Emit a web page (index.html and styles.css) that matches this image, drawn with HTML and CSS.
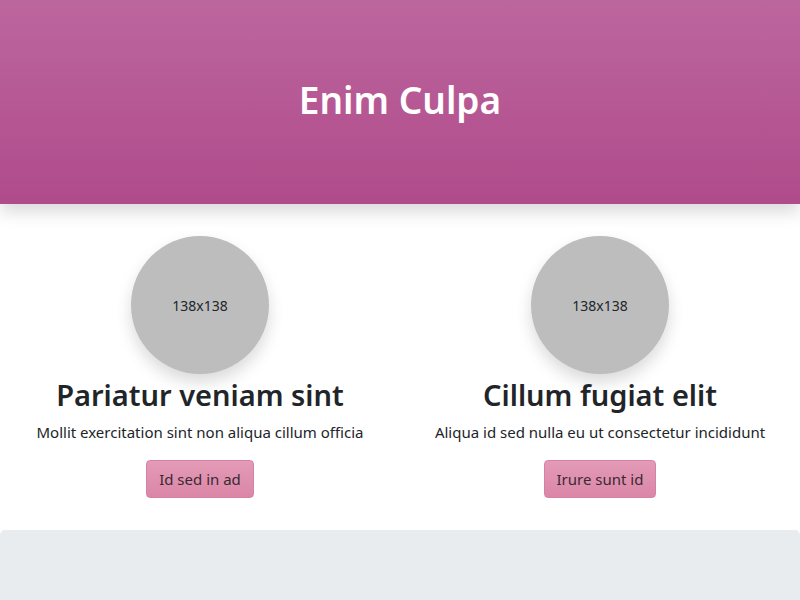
FILE: index.html
```html
<!DOCTYPE html>
<html lang="en">
<head>
<meta charset="utf-8">
<title>Enim Culpa</title>
<link rel="stylesheet" href="styles.css">
</head>
<body>
<header class="hero">
  <h1 class="hero-title">Enim Culpa</h1>
</header>
<main class="features">
  <div class="feature">
    <div class="avatar">138x138</div>
    <h2 class="feature-title">Pariatur veniam sint</h2>
    <p class="feature-text">Mollit exercitation sint non aliqua cillum officia</p>
    <button class="btn">Id sed in ad</button>
  </div>
  <div class="feature">
    <div class="avatar">138x138</div>
    <h2 class="feature-title">Cillum fugiat elit</h2>
    <p class="feature-text">Aliqua id sed nulla eu ut consectetur incididunt</p>
    <button class="btn">Irure sunt id</button>
  </div>
</main>
<section class="jumbotron"></section>
</body>
</html>
```
FILE: styles.css
```css
* { box-sizing: border-box; }
html, body { margin: 0; padding: 0; }
body {
  font-family: "Noto Sans", "Open Sans", sans-serif;
  color: #212529;
  background: #fff;
  font-size: 16px;
  line-height: 1.5;
  overflow: hidden;
}
.hero {
  height: 204px;
  background: linear-gradient(to bottom, #bc669e, #b04b8b);
  box-shadow: 0 8px 16px rgba(0,0,0,0.15);
  display: flex;
  align-items: center;
  justify-content: center;
  position: relative;
  z-index: 1;
}
.hero-title {
  margin: 0;
  color: #fff;
  font-size: 37px;
  font-weight: 600;
  line-height: 1.2;
  padding-bottom: 4px;
}
.features {
  display: grid;
  grid-template-columns: 1fr 1fr;
  padding: 32px 0 32px;
}
.feature {
  display: flex;
  flex-direction: column;
  align-items: center;
  text-align: center;
}
.avatar {
  width: 138px;
  height: 138px;
  border-radius: 50%;
  background: #bdbdbd;
  box-shadow: 0 8px 16px rgba(0,0,0,0.15);
  display: flex;
  align-items: center;
  justify-content: center;
  font-size: 14px;
  color: #212529;
}
.feature-title {
  margin: 2px 0 6px;
  font-size: 29px;
  font-weight: 600;
  line-height: 38px;
}
.feature-text {
  margin: 0 0 16px;
  font-size: 15px;
  line-height: 24px;
}
.btn {
  font-family: inherit;
  font-size: 15px;
  line-height: 24px;
  padding: 6px 12px;
  height: 38px;
  color: #3a2a33;
  background: linear-gradient(to bottom, #e39bb6, #db86a7);
  border: 1px solid #d880a3;
  border-radius: 4px;
}
.jumbotron {
  height: 80px;
  background: #e9ecef;
  border-radius: 5px 5px 0 0;
}
```
